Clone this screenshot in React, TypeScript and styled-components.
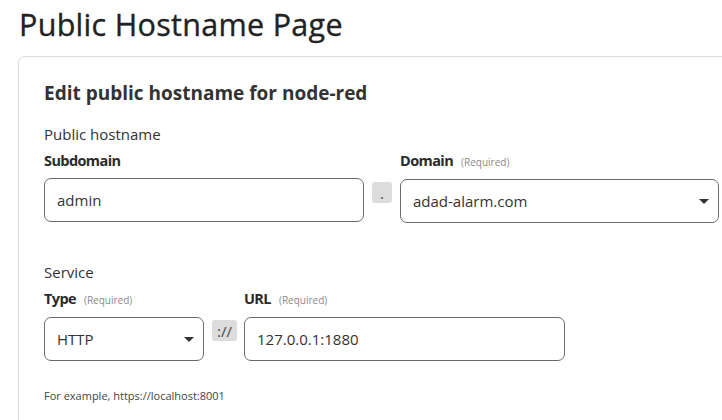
import React from "react";
import styled, { createGlobalStyle } from "styled-components";

const Global = createGlobalStyle`
  html, body { margin: 0; padding: 0; background: #fff; overflow: hidden; }
  body { font-family: "Open Sans", "Noto Sans", sans-serif; color: #333; }
  * { box-sizing: border-box; }
`;

const Page = styled.div`
  width: 722px;
  height: 420px;
  overflow: hidden;
  padding: 4px 0 0 18px;
`;

const Title = styled.h1`
  margin: 0 0 0 1px;
  font-size: 30.5px;
  line-height: 40px;
  font-weight: 400;
  color: #222;
  letter-spacing: 0.3px;
  -webkit-text-stroke: 0.35px #222;
`;

const Card = styled.section`
  margin-top: 12px;
  width: 740px;
  height: 400px;
  border: 1px solid #dcdcdc;
  border-radius: 7px;
  padding: 22px 0 0 25px;
  box-shadow: 0 0 2px rgba(0, 0, 0, 0.05);
`;

const CardTitle = styled.h2`
  margin: 0;
  font-size: 19px;
  line-height: 28px;
  font-weight: 700;
  color: #333;
`;

const Group = styled.div<{ $top: number }>`
  margin-top: ${(p) => p.$top}px;
`;

const GroupLabel = styled.div`
  font-size: 15px;
  line-height: 20px;
  color: #333;
`;

const Row = styled.div`
  display: flex;
  align-items: flex-start;
  margin-top: 7px;
`;

const Field = styled.div<{ $w: number }>`
  width: ${(p) => p.$w}px;
  flex: none;
`;

const Label = styled.div`
  display: flex;
  align-items: baseline;
  gap: 8px;
  font-size: 14.5px;
  line-height: 20px;
  font-weight: 700;
  letter-spacing: -0.6px;
  color: #2b2b2b;
  margin-bottom: 7px;
`;

const Req = styled.span`
  font-size: 10px;
  font-weight: 400;
  letter-spacing: 0;
  color: #8a8a8a;
`;

const Box = styled.div`
  height: 44px;
  border: 1px solid #6b6b6b;
  border-radius: 7px;
  display: flex;
  align-items: center;
  padding: 0 12px;
  font-size: 15px;
  color: #333;
  background: #fff;
`;

const SelectBox = styled(Box)`
  justify-content: space-between;
`;

const Caret = styled.span`
  width: 0;
  height: 0;
  border-left: 5px solid transparent;
  border-right: 5px solid transparent;
  border-top: 5px solid #333;
  margin-right: -3px;
`;

const Sep = styled.div<{ $w: number; $ml: number; $mr: number }>`
  flex: none;
  width: ${(p) => p.$w}px;
  height: 21px;
  margin: 31px ${(p) => p.$mr}px 0 ${(p) => p.$ml}px;
  background: #dcdcdc;
  border-radius: 3px;
  display: flex;
  align-items: center;
  justify-content: center;
  font-size: 15px;
  color: #444;
`;

const Hint = styled.div`
  margin-top: 27px;
  font-size: 11px;
  color: #444;
`;

export default function App() {
  return (
    <>
      <Global />
      <Page>
        <Title>Public Hostname Page</Title>
        <Card>
          <CardTitle>Edit public hostname for node-red</CardTitle>
          <Group $top={17}>
            <GroupLabel>Public hostname</GroupLabel>
            <Row>
              <Field $w={320}>
                <Label>Subdomain</Label>
                <Box>admin</Box>
              </Field>
              <Sep $w={20} $ml={8} $mr={8}>.</Sep>
              <Field $w={319}>
                <Label>
                  Domain <Req>(Required)</Req>
                </Label>
                <SelectBox>
                  adad-alarm.com
                  <Caret />
                </SelectBox>
              </Field>
            </Row>
          </Group>
          <Group $top={39}>
            <GroupLabel>Service</GroupLabel>
            <Row>
              <Field $w={160}>
                <Label>
                  Type <Req>(Required)</Req>
                </Label>
                <SelectBox>
                  HTTP
                  <Caret />
                </SelectBox>
              </Field>
              <Sep $w={25} $ml={8} $mr={7}>://</Sep>
              <Field $w={321}>
                <Label>
                  URL <Req>(Required)</Req>
                </Label>
                <Box>127.0.0.1:1880</Box>
              </Field>
            </Row>
          </Group>
          <Hint>For example, https://localhost:8001</Hint>
        </Card>
      </Page>
    </>
  );
}
